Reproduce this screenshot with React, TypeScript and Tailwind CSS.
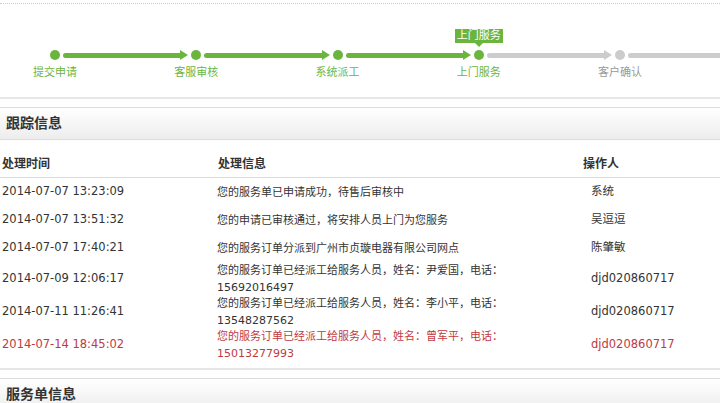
import React from "react";

type Seg = "green" | "gray" | null;

const steps: { label: string; done: boolean; left: Seg; right: Seg; current?: boolean }[] = [
  { label: "提交申请", done: true, left: null, right: "green" },
  { label: "客服审核", done: true, left: "green", right: "green" },
  { label: "系统派工", done: true, left: "green", right: "green" },
  { label: "上门服务", done: true, left: "green", right: "gray", current: true },
  { label: "客户确认", done: false, left: "gray", right: "gray" },
  { label: "", done: false, left: "gray", right: null },
];

const rows = [
  { time: "2014-07-07 13:23:09", info: "您的服务单已申请成功，待售后审核中", op: "系统" },
  { time: "2014-07-07 13:51:32", info: "您的申请已审核通过，将安排人员上门为您服务", op: "吴逗逗" },
  { time: "2014-07-07 17:40:21", info: "您的服务订单分派到广州市贞璇电器有限公司网点", op: "陈肇敏" },
  { time: "2014-07-09 12:06:17", info: "您的服务订单已经派工给服务人员，姓名：尹爱国，电话：15692016497", op: "djd020860717", two: true },
  { time: "2014-07-11 11:26:41", info: "您的服务订单已经派工给服务人员，姓名：李小平，电话：13548287562", op: "djd020860717", two: true },
  { time: "2014-07-14 18:45:02", info: "您的服务订单已经派工给服务人员，姓名：曾军平，电话：15013277993", op: "djd020860717", two: true, red: true },
];

function LeftSeg({ seg }: { seg: Seg }) {
  if (!seg) return <div className="flex-1" />;
  const green = seg === "green";
  return (
    <div className="flex-1 flex items-center">
      <div className={`flex-1 h-[5px] ${green ? "bg-[#6bb53f]" : "bg-[#cccccc]"}`} />
      <div
        className={`w-0 h-0 border-y-[5px] border-y-transparent border-l-[8px] ${
          green ? "border-l-[#6bb53f]" : "border-l-[#cccccc]"
        }`}
      />
    </div>
  );
}

function RightSeg({ seg }: { seg: Seg }) {
  if (!seg) return <div className="flex-1" />;
  return (
    <div
      className={`flex-1 h-[5px] rounded-l-full ${seg === "green" ? "bg-[#6bb53f]" : "bg-[#cccccc]"}`}
    />
  );
}

function Step({ s }: { s: (typeof steps)[number] }) {
  const hasDot = s.label !== "";
  return (
    <div className="w-[141.25px] shrink-0 flex flex-col">
      <div className="h-[46px] flex flex-col items-center justify-end pb-[3px]">
        {s.current && (
          <>
            <div className="h-[14px] px-[2px] bg-[#6bb53f] text-white text-[11px] leading-[14px]">
              {s.label}
            </div>
            <div className="w-0 h-0 border-x-[4px] border-x-transparent border-t-[4px] border-t-[#6bb53f]" />
          </>
        )}
      </div>
      <div className="h-[10px] flex items-center">
        <LeftSeg seg={s.left} />
        <div className="w-[16px] flex justify-center">
          {hasDot && (
            <div
              className={`w-[10px] h-[10px] rounded-full ${s.done ? "bg-[#6bb53f]" : "bg-[#cccccc]"}`}
            />
          )}
        </div>
        <RightSeg seg={s.right} />
      </div>
      <div
        className={`mt-[5px] h-[16px] leading-[16px] text-center text-[11px] ${
          s.done ? "text-[#6bb53f]" : "text-[#999999]"
        }`}
      >
        {s.label}
      </div>
    </div>
  );
}

function SectionHeader({ title }: { title: string }) {
  return (
    <div className="h-[33px] border-y border-[#dddddd] bg-gradient-to-b from-white to-[#ededed] flex items-center pl-[6px]">
      <span className="text-[14px] font-bold text-[#333333]">{title}</span>
    </div>
  );
}

export default function App() {
  return (
    <div
      className="w-[720px] h-[403px] overflow-hidden bg-white text-[#333333]"
      style={{ fontFamily: '"DejaVu Sans", "Noto Sans CJK SC", sans-serif' }}
    >
      <div className="pt-[3px]">
        <div className="border-t border-dotted border-[#cccccc]" />
        <div className="border-b-2 border-solid border-[#e6e6e6] pb-[16px] overflow-hidden">
          <div className="flex ml-[-15.6px]">
            {steps.map((s, i) => (
              <Step key={i} s={s} />
            ))}
          </div>
        </div>
      </div>

      <div className="mt-[8px]">
        <SectionHeader title="跟踪信息" />
        <div className="mt-[10px] pb-[7px] border-b-2 border-[#e6e6e6]">
          <div className="flex h-[28px] items-center border-b border-[#dddddd] text-[12px] font-bold">
            <div className="w-[217px] pl-[2px]">处理时间</div>
            <div className="w-[366px] pl-[1px]">处理信息</div>
            <div className="flex-1">操作人</div>
          </div>
          {rows.map((r, i) => (
            <div
              key={i}
              className={`flex items-center ${r.two ? "h-[33px]" : "h-[28px]"} ${
                r.red ? "text-[#c0393f]" : "text-[#333333]"
              }`}
            >
              <div className="w-[217px] pl-[2px] text-[11.5px]">{r.time}</div>
              <div className="w-[366px]">
                <div className="w-[300px] text-[11px] leading-[17px]">{r.info}</div>
              </div>
              <div className="flex-1 pl-[8px] text-[11.5px]">{r.op}</div>
            </div>
          ))}
        </div>
      </div>

      <div className="mt-[8px]">
        <SectionHeader title="服务单信息" />
      </div>
    </div>
  );
}
